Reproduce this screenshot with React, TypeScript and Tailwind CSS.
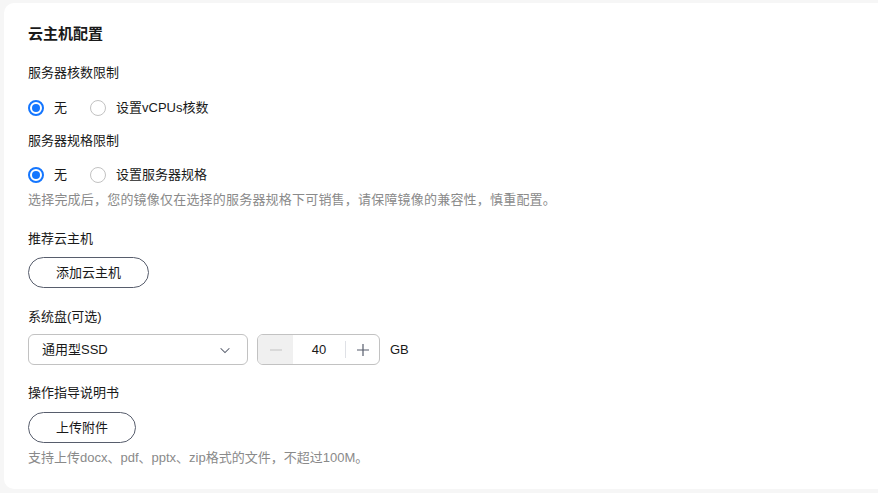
import React, { useState } from 'react';

const font = { fontFamily: '"Liberation Sans", "Noto Sans CJK SC", sans-serif' };

const Radio: React.FC<{ checked: boolean; label: string; onClick: () => void }> = ({ checked, label, onClick }) => (
  <button onClick={onClick} className="flex items-center gap-[10px] text-[13px] text-[#191919]">
    {checked ? (
      <span className="w-4 h-4 rounded-full border-2 border-[#1476ff] flex items-center justify-center">
        <span className="w-2 h-2 rounded-full bg-[#1476ff]" />
      </span>
    ) : (
      <span className="w-4 h-4 rounded-full border border-[#c2c2c2] bg-white" />
    )}
    <span>{label}</span>
  </button>
);

const App: React.FC = () => {
  const [cores, setCores] = useState(0);
  const [spec, setSpec] = useState(0);
  const [size, setSize] = useState(40);

  return (
    <div className="w-[878px] h-[493px] bg-[#f6f6f6] pl-[4px] pt-[3px] pb-[4px] overflow-hidden" style={font}>
      <div className="h-full bg-white rounded-l-[10px] pl-6 pt-[21px]">
        <h2 className="text-[15px] font-bold text-[#191919] leading-[20px]">云主机配置</h2>

        <div className="mt-[19px] text-[13px] text-[#191919] leading-[20px]">服务器核数限制</div>
        <div className="flex items-center gap-[23px] mt-[15px] h-5">
          <Radio checked={cores === 0} label="无" onClick={() => setCores(0)} />
          <Radio checked={cores === 1} label="设置vCPUs核数" onClick={() => setCores(1)} />
        </div>

        <div className="mt-[13px] text-[13px] text-[#191919] leading-[20px]">服务器规格限制</div>
        <div className="flex items-center gap-[23px] mt-[14px] h-5">
          <Radio checked={spec === 0} label="无" onClick={() => setSpec(0)} />
          <Radio checked={spec === 1} label="设置服务器规格" onClick={() => setSpec(1)} />
        </div>
        <p className="mt-[5px] text-[13px] text-[#8a8a8a] leading-[20px] tracking-[0.2px]">
          选择完成后，您的镜像仅在选择的服务器规格下可销售，请保障镜像的兼容性，慎重配置。
        </p>

        <div className="mt-[19px] text-[13px] text-[#191919] leading-[20px]">推荐云主机</div>
        <button className="mt-[8px] w-[121px] h-[31px] rounded-full border border-[#575d6c] text-[13px] text-[#191919]">
          添加云主机
        </button>

        <div className="mt-[19px] text-[13px] text-[#191919] leading-[20px]">系统盘(可选)</div>
        <div className="flex items-center mt-[7px]">
          <div className="w-[220px] h-[31px] border border-[#c2c2c2] rounded-[6px] flex items-center justify-between pl-[13px] pr-[15px] text-[13px] text-[#191919]">
            <span>通用型SSD</span>
            <svg width="14" height="14" viewBox="0 0 16 16" fill="none" stroke="#575d6c" strokeWidth="1.2">
              <path d="M3 6l5 5 5-5" />
            </svg>
          </div>
          <div className="ml-[9px] w-[123px] h-[31px] border border-[#c2c2c2] rounded-[6px] flex items-center overflow-hidden">
            <button
              onClick={() => setSize(Math.max(40, size - 1))}
              className="w-[35px] h-full bg-[#f0f0f0] flex items-center justify-center"
            >
              <svg width="14" height="14" viewBox="0 0 14 14" stroke="#c2c2c2" strokeWidth="1.2">
                <path d="M1 7h12" />
              </svg>
            </button>
            <span className="w-[52px] text-center text-[13px] text-[#191919]">{size}</span>
            <span className="w-px h-[17px] bg-[#dfe1e6]" />
            <button onClick={() => setSize(size + 1)} className="flex-1 h-full flex items-center justify-center">
              <svg width="14" height="14" viewBox="0 0 14 14" stroke="#575d6c" strokeWidth="1.2">
                <path d="M1 7h12M7 1v12" />
              </svg>
            </button>
          </div>
          <span className="ml-[10px] text-[13px] text-[#191919]">GB</span>
        </div>

        <div className="mt-[18px] text-[13px] text-[#191919] leading-[20px]">操作指导说明书</div>
        <button className="mt-[9px] w-[108px] h-[31px] rounded-full border border-[#575d6c] text-[13px] text-[#191919]">
          上传附件
        </button>
        <p className="mt-[5px] text-[13px] text-[#8a8a8a] leading-[20px]">
          支持上传docx、pdf、pptx、zip格式的文件，不超过100M。
        </p>
      </div>
    </div>
  );
};

export default App;
